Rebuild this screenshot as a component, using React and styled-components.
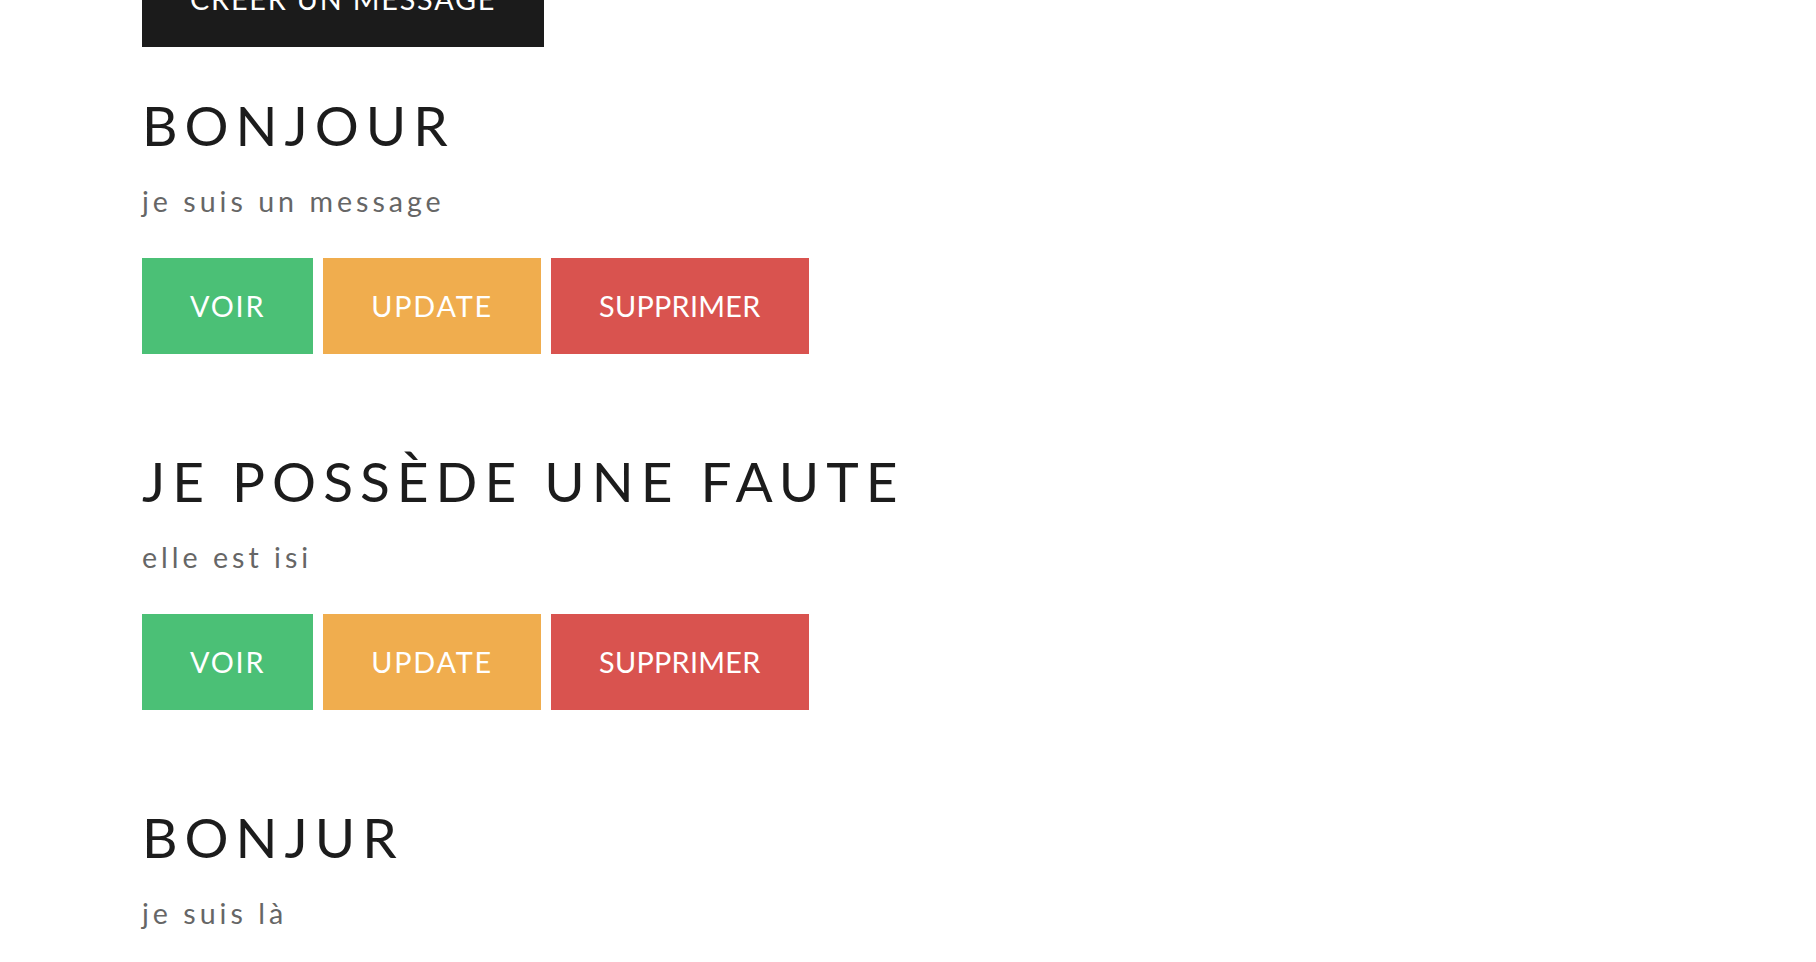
import React from 'react';
import styled, { createGlobalStyle } from 'styled-components';

const GlobalStyle = createGlobalStyle`
  html, body {
    margin: 0;
    padding: 0;
    background: #ffffff;
    overflow: hidden;
  }
  body {
    font-family: Lato, "Open Sans", Arial, sans-serif;
  }
`;

// the page is scrolled a little: the create button is half cut at the top
const Page = styled.main`
  padding: 0 142px;
  margin-top: -49px;
  display: flex;
  flex-direction: column;
  align-items: flex-start;
`;

const ActionButton = styled.button`
  height: 96px;
  padding: 0 48px;
  border: none;
  border-radius: 0;
  background: ${props => props.color || '#1b1b1b'};
  color: #ffffff;
  font-family: Lato, "Open Sans", Arial, sans-serif;
  font-size: 28.8px;
  font-weight: 400;
  letter-spacing: ${props => props.$tracking || '1.8px'};
  text-transform: uppercase;
  cursor: pointer;
  white-space: nowrap;
`;

const MessageList = styled.section`
  display: flex;
  flex-direction: column;
  gap: 94px;
  margin-top: 45px;
`;

const Message = styled.article`
  display: flex;
  flex-direction: column;
  align-items: flex-start;
`;

const Title = styled.h2`
  margin: 0;
  font-size: 55px;
  line-height: 66px;
  font-weight: 400;
  letter-spacing: 7px;
  color: #1c1c1c;
  text-transform: uppercase;
`;

const Body = styled.p`
  margin: 23px 0 0;
  font-size: 28.6px;
  line-height: 40px;
  font-weight: 400;
  letter-spacing: 4px;
  color: #666666;
`;

const ButtonRow = styled.div`
  display: flex;
  gap: 10px;
  margin-top: 37px;
`;

const messages = [
  { id: 1, title: 'Bonjour', body: 'je suis un message' },
  { id: 2, title: 'Je possède une faute', body: 'elle est isi' },
  { id: 3, title: 'Bonjur', body: 'je suis là' },
];

const App = () => {
  return (
    <>
      <GlobalStyle />
      <Page>
        <ActionButton>Créer un message</ActionButton>
        <MessageList>
          {messages.map(msg => (
            <Message key={msg.id}>
              <Title>{msg.title}</Title>
              <Body>{msg.body}</Body>
              <ButtonRow>
                <ActionButton color="#4bc076">Voir</ActionButton>
                <ActionButton color="#f0ad4e">Update</ActionButton>
                <ActionButton color="#d9534f" $tracking="0.3px">Supprimer</ActionButton>
              </ButtonRow>
            </Message>
          ))}
        </MessageList>
      </Page>
    </>
  );
};

export default App;
